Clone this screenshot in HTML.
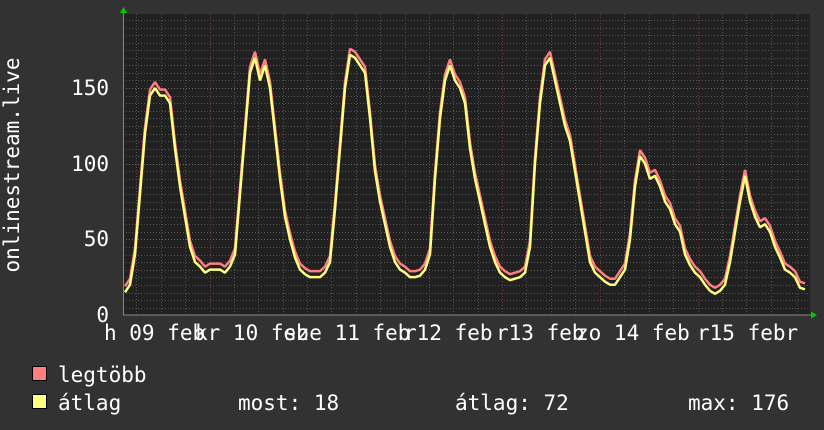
<!DOCTYPE html>
<html><head><meta charset="utf-8"><style>
html,body{margin:0;padding:0;background:#323232;}
svg{display:block}
text{font-family:"DejaVu Sans Mono","Liberation Mono",monospace;fill:#fff;font-size:21px}
</style></head><body>
<svg width="824" height="430" viewBox="0 0 824 430" xmlns="http://www.w3.org/2000/svg">
<rect width="824" height="430" fill="#323232"/>
<rect x="123" y="14" width="687" height="301" fill="#212121"/>
<g stroke="#555" stroke-width="1" stroke-dasharray="1,2">
<path d="M123 308.5H810M123 300.5H810M123 293.5H810M123 285.5H810M123 277.5H810M123 270.5H810M123 262.5H810M123 255.5H810M123 247.5H810M123 232.5H810M123 224.5H810M123 217.5H810M123 209.5H810M123 202.5H810M123 194.5H810M123 187.5H810M123 179.5H810M123 171.5H810M123 156.5H810M123 149.5H810M123 141.5H810M123 134.5H810M123 126.5H810M123 118.5H810M123 111.5H810M123 103.5H810M123 96.5H810M123 80.5H810M123 73.5H810M123 65.5H810M123 58.5H810M123 50.5H810M123 43.5H810M123 35.5H810M123 28.5H810M123 20.5H810"/>
<path d="M136.5 14V315M161.5 14V315M185.5 14V315M234.5 14V315M258.5 14V315M283.5 14V315M331.5 14V315M356.5 14V315M380.5 14V315M429.5 14V315M453.5 14V315M478.5 14V315M526.5 14V315M551.5 14V315M575.5 14V315M624.5 14V315M649.5 14V315M673.5 14V315M722.5 14V315M746.5 14V315M771.5 14V315"/>
</g>
<g stroke="#6a6a6a" stroke-width="1" stroke-dasharray="1,2">
<path d="M123 239.5H810M123 164.5H810M123 88.5H810"/>
</g>
<g stroke="#6e3a3a" stroke-width="1" stroke-dasharray="1,2">
<path d="M210.5 14V315M307.5 14V315M405.5 14V315M502.5 14V315M600.5 14V315M698.5 14V315M797.5 14V315"/>
</g>
<path d="M123 315H814" stroke="#888" stroke-width="1"/>
<path d="M123.5 10V315" stroke="#888" stroke-width="1"/>
<path d="M120 13L123.5 7L127 13Z" fill="#0c0"/>
<path d="M811 311.5L817 315L811 318.5Z" fill="#0c0"/>
<g transform="translate(0,309) scale(1,-1.513)">
<polyline fill="none" stroke="#ff7f7f" stroke-width="2.5" vector-effect="non-scaling-stroke" stroke-linejoin="bevel" points="125,15 130,20 135,40 140,80 145,120 150,145 155,150 160,145 165,145 170,140 175,110 180,85 185,65 190,45 195,35 200,32 205,28 210,30 215,30 220,30 225,28 230,32 235,40 240,80 245,120 250,160 255,170 260,155 265,165 270,150 275,120 280,90 285,65 290,50 295,38 300,30 305,27 310,25 315,25 320,25 325,28 330,35 335,70 340,110 345,150 350,172 355,170 360,165 365,160 370,130 375,95 380,75 385,60 390,45 395,35 400,30 405,28 410,25 415,25 420,26 425,30 430,40 435,90 440,130 445,155 450,165 455,155 460,150 465,140 470,110 475,90 480,75 485,60 490,45 495,35 500,28 505,25 510,23 515,24 520,25 525,28 530,45 535,100 540,140 545,165 550,170 555,155 560,140 565,125 570,115 575,95 580,75 585,55 590,35 595,28 600,25 605,22 610,20 615,20 620,25 625,30 630,50 635,85 640,105 645,100 650,90 655,92 660,85 665,75 670,70 675,60 680,55 685,40 690,33 695,28 700,25 705,20 710,16 715,14 720,16 725,20 730,35 735,55 740,75 745,92 750,75 755,65 760,58 765,60 770,55 775,45 780,38 785,30 790,28 795,25 800,18 805,17"/>
</g>
<g transform="translate(0,315) scale(1,-1.513)">
<polyline fill="none" stroke="#ffff80" stroke-width="2.5" vector-effect="non-scaling-stroke" stroke-linejoin="bevel" points="125,15 130,20 135,40 140,80 145,120 150,145 155,150 160,145 165,145 170,140 175,110 180,85 185,65 190,45 195,35 200,32 205,28 210,30 215,30 220,30 225,28 230,32 235,40 240,80 245,120 250,160 255,170 260,155 265,165 270,150 275,120 280,90 285,65 290,50 295,38 300,30 305,27 310,25 315,25 320,25 325,28 330,35 335,70 340,110 345,150 350,172 355,170 360,165 365,160 370,130 375,95 380,75 385,60 390,45 395,35 400,30 405,28 410,25 415,25 420,26 425,30 430,40 435,90 440,130 445,155 450,165 455,155 460,150 465,140 470,110 475,90 480,75 485,60 490,45 495,35 500,28 505,25 510,23 515,24 520,25 525,28 530,45 535,100 540,140 545,165 550,170 555,155 560,140 565,125 570,115 575,95 580,75 585,55 590,35 595,28 600,25 605,22 610,20 615,20 620,25 625,30 630,50 635,85 640,105 645,100 650,90 655,92 660,85 665,75 670,70 675,60 680,55 685,40 690,33 695,28 700,25 705,20 710,16 715,14 720,16 725,20 730,35 735,55 740,75 745,92 750,75 755,65 760,58 765,60 770,55 775,45 780,38 785,30 790,28 795,25 800,18 805,17"/>
</g>
<text x="109" y="95" text-anchor="end">150</text>
<text x="109" y="171" text-anchor="end">100</text>
<text x="109" y="246" text-anchor="end">50</text>
<text x="109" y="322" text-anchor="end">0</text>
<text transform="translate(19,165) rotate(-90)" text-anchor="middle">onlinestream.live</text>
<text x="104" y="340">h 09 feb</text>
<text x="195" y="340">kr 10 feb</text>
<text x="284" y="340">sze 11 feb</text>
<text x="404" y="340">r12 feb</text>
<text x="496" y="340">r13 feb</text>
<text x="576" y="340">zo 14 feb</text>
<text x="697" y="340">r15 febr</text>
<rect x="32.5" y="366.5" width="14" height="14" fill="#ff7f7f" stroke="#000"/>
<rect x="32.5" y="394.5" width="14" height="14" fill="#ffff80" stroke="#000"/>
<text x="58" y="382">legtöbb</text>
<text x="58" y="410">átlag</text>
<text x="238" y="410">most: 18</text>
<text x="455" y="410">átlag: 72</text>
<text x="688" y="410">max: 176</text>
</svg>
</body></html>
